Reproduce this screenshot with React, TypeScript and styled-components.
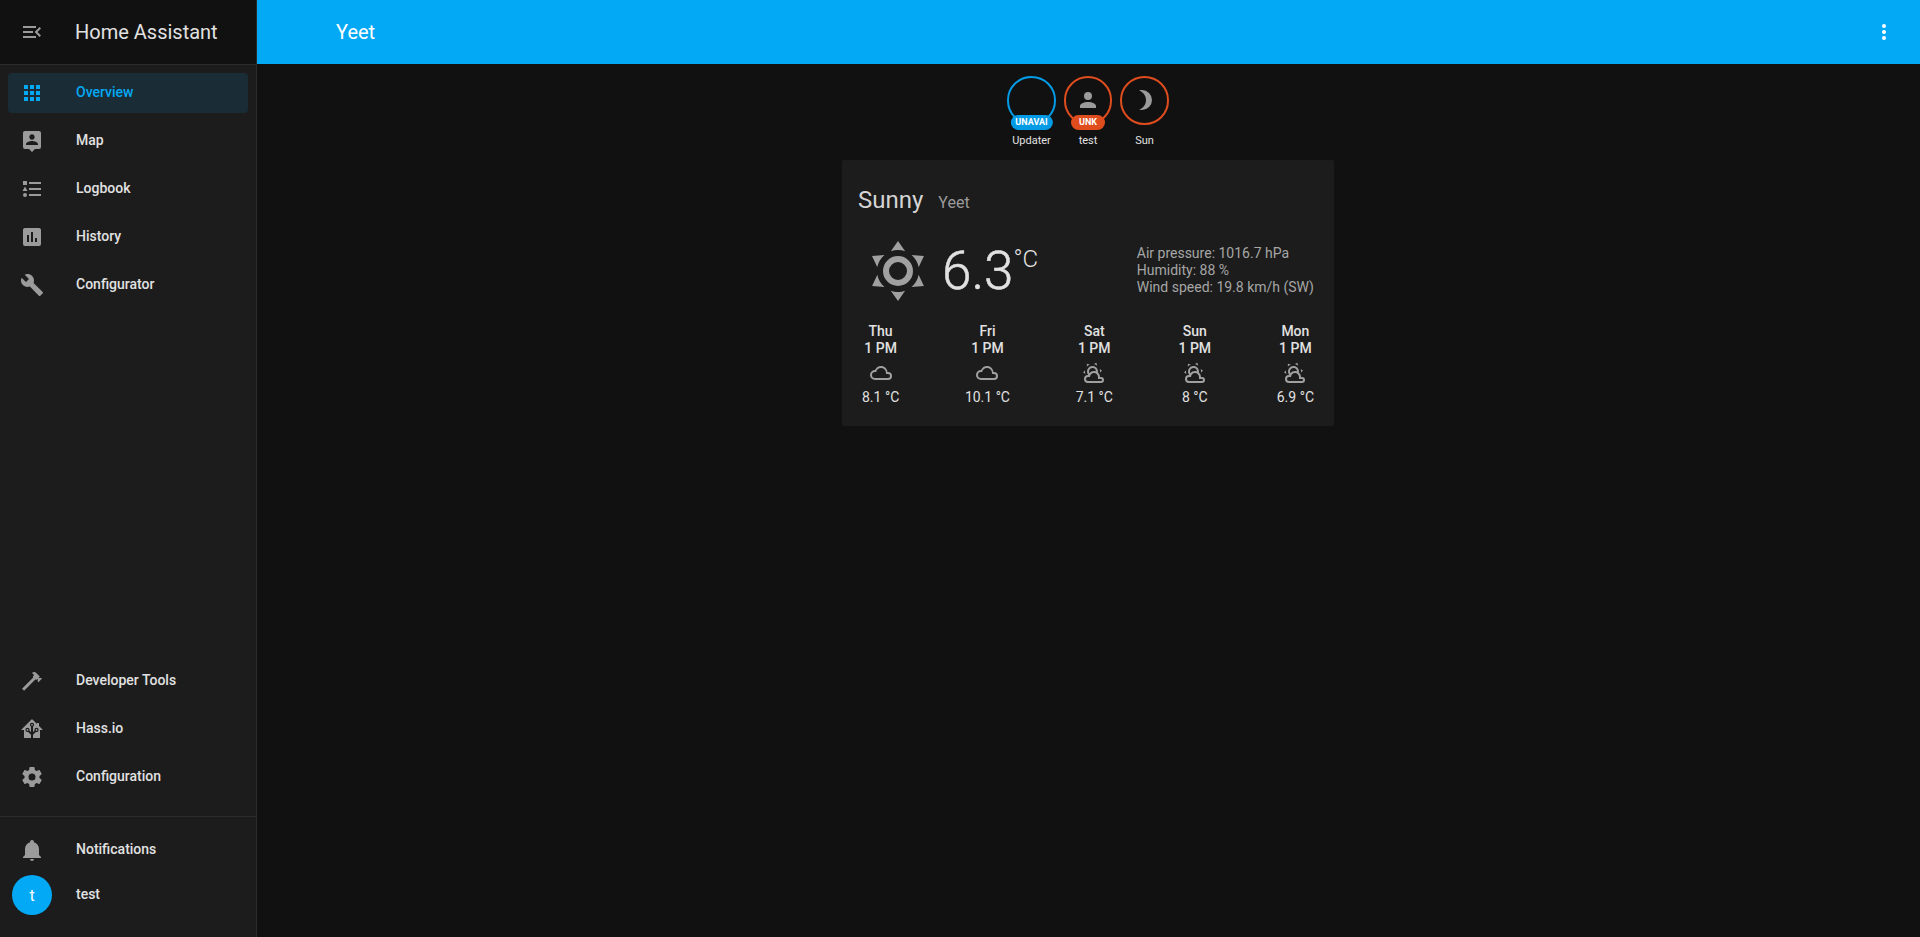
import React from "react";
import styled, { createGlobalStyle } from "styled-components";

const P = {
  menuOpen: "M21,15.61L19.59,17L14.58,12L19.59,7L21,8.39L17.44,12L21,15.61M3,6H16V8H3V6M3,13V11H13V13H3M3,18V16H16V18H3Z",
  dots: "M12,16A2,2 0 0,1 14,18A2,2 0 0,1 12,20A2,2 0 0,1 10,18A2,2 0 0,1 12,16M12,10A2,2 0 0,1 14,12A2,2 0 0,1 12,14A2,2 0 0,1 10,12A2,2 0 0,1 12,10M12,4A2,2 0 0,1 14,6A2,2 0 0,1 12,8A2,2 0 0,1 10,6A2,2 0 0,1 12,4Z",
  apps: "M16,20H20V16H16M16,14H20V10H16M10,8H14V4H10M16,8H20V4H16M10,14H14V10H10M4,14H8V10H4M4,20H8V16H4M10,20H14V16H10M4,8H8V4H4V8Z",
  map: "M18,16H6V15.1C6,13.1 10,12 12,12C14,12 18,13.1 18,15.1M12,5.3C13.5,5.3 14.7,6.5 14.7,8C14.7,9.5 13.5,10.7 12,10.7C10.5,10.7 9.3,9.5 9.3,8C9.3,6.5 10.5,5.3 12,5.3M19,2H5C3.89,2 3,2.89 3,4V18A2,2 0 0,0 5,20H9L12,23L15,20H19A2,2 0 0,0 21,18V4C21,2.89 20.1,2 19,2Z",
  log: "M5,9.5L7.5,14H2.5L5,9.5M3,4H7V8H3V4M5,20A2,2 0 0,0 7,18A2,2 0 0,0 5,16A2,2 0 0,0 3,18A2,2 0 0,0 5,20M9,5V7H21V5H9M9,19H21V17H9V19M9,13H21V11H9V13Z",
  history: "M17,17H15V13H17M13,17H11V7H13M9,17H7V10H9M19,3H5C3.89,3 3,3.89 3,5V19A2,2 0 0,0 5,21H19A2,2 0 0,0 21,19V5C21,3.89 20.1,3 19,3Z",
  wrench: "M22.7,19L13.6,9.9C14.5,7.6 14,4.9 12.1,3C10.1,1 7.1,0.6 4.7,1.7L9,6L6,9L1.6,4.7C0.4,7.1 0.9,10.1 2.9,12.1C4.8,14 7.5,14.5 9.8,13.6L18.9,22.7C19.3,23.1 19.9,23.1 20.3,22.7L22.6,20.4C23.1,20 23.1,19.3 22.7,19Z",
  hammer: "M2 19.63L13.43 8.2L12.72 7.5L14.14 6.07L12 3.89C13.2 2.7 15.09 2.7 16.27 3.89L19.87 7.5L18.45 8.91H21.29L22 9.62L18.45 13.21L17.74 12.5V9.62L16.27 11.04L15.56 10.33L4.13 21.76L2 19.63Z",
  hass: "M21.8,13H20V21H13V17.67L15.79,14.88L16.5,15C17.66,15 18.6,14.06 18.6,12.9C18.6,11.74 17.66,10.8 16.5,10.8A2.1,2.1 0 0,0 14.4,12.9L14.5,13.61L13,15.13V9.65C13.66,9.29 14.1,8.6 14.1,7.8A2.1,2.1 0 0,0 12,5.7A2.1,2.1 0 0,0 9.9,7.8C9.9,8.6 10.34,9.29 11,9.65V15.13L9.5,13.61L9.6,12.9A2.1,2.1 0 0,0 7.5,10.8A2.1,2.1 0 0,0 5.4,12.9A2.1,2.1 0 0,0 7.5,15L8.21,14.88L11,17.67V21H4V13H2.25C1.83,13 1.42,13 1.42,12.79C1.43,12.57 1.85,12.15 2.28,11.72L11,3C11.33,2.67 11.67,2.33 12,2.33C12.33,2.33 12.67,2.67 13,3L17,7V6H19V9L21.78,11.78C22.15,12.15 22.53,12.53 22.54,12.76C22.56,13 22.18,13 21.8,13M7.5,12A0.9,0.9 0 0,1 8.4,12.9A0.9,0.9 0 0,1 7.5,13.8A0.9,0.9 0 0,1 6.6,12.9A0.9,0.9 0 0,1 7.5,12M16.5,12C17,12 17.4,12.4 17.4,12.9C17.4,13.4 17,13.8 16.5,13.8A0.9,0.9 0 0,1 15.6,12.9A0.9,0.9 0 0,1 16.5,12M12,6.9C12.5,6.9 12.9,7.3 12.9,7.8C12.9,8.3 12.5,8.7 12,8.7C11.5,8.7 11.1,8.3 11.1,7.8C11.1,7.3 11.5,6.9 12,6.9Z",
  gear: "M12,15.5A3.5,3.5 0 0,1 8.5,12A3.5,3.5 0 0,1 12,8.5A3.5,3.5 0 0,1 15.5,12A3.5,3.5 0 0,1 12,15.5M19.43,12.97C19.47,12.65 19.5,12.33 19.5,12C19.5,11.67 19.47,11.34 19.43,11L21.54,9.37C21.73,9.22 21.78,8.95 21.66,8.73L19.66,5.27C19.54,5.05 19.27,4.96 19.05,5.05L16.56,6.05C16.04,5.66 15.5,5.32 14.87,5.07L14.5,2.42C14.46,2.18 14.25,2 14,2H10C9.75,2 9.54,2.18 9.5,2.42L9.13,5.07C8.5,5.32 7.96,5.66 7.44,6.05L4.95,5.05C4.73,4.96 4.46,5.05 4.34,5.27L2.34,8.73C2.21,8.95 2.27,9.22 2.46,9.37L4.57,11C4.53,11.34 4.5,11.67 4.5,12C4.5,12.33 4.53,12.65 4.57,12.97L2.46,14.63C2.27,14.78 2.21,15.05 2.34,15.27L4.34,18.73C4.46,18.95 4.73,19.03 4.95,18.95L7.44,17.94C7.96,18.34 8.5,18.68 9.13,18.93L9.5,21.58C9.54,21.82 9.75,22 10,22H14C14.25,22 14.46,21.82 14.5,21.58L14.87,18.93C15.5,18.67 16.04,18.34 16.56,17.94L19.05,18.95C19.27,19.03 19.54,18.95 19.66,18.73L21.66,15.27C21.78,15.05 21.73,14.78 21.54,14.63L19.43,12.97Z",
  bell: "M21,19V20H3V19L5,17V11C5,7.9 7.03,5.17 10,4.29C10,4.19 10,4.1 10,4A2,2 0 0,1 12,2A2,2 0 0,1 14,4C14,4.1 14,4.19 14,4.29C16.97,5.17 19,7.9 19,11V17L21,19M14,21A2,2 0 0,1 12,23A2,2 0 0,1 10,21",
  account: "M12,4A4,4 0 0,1 16,8A4,4 0 0,1 12,12A4,4 0 0,1 8,8A4,4 0 0,1 12,4M12,14C16.42,14 20,15.79 20,18V20H4V18C4,15.79 7.58,14 12,14Z",
  moon: "M9,2C7.95,2 6.95,2.16 6,2.46C10.06,3.73 13,7.5 13,12C13,16.5 10.06,20.27 6,21.54C6.95,21.84 7.95,22 9,22A10,10 0 0,0 19,12A10,10 0 0,0 9,2Z",
  sunny: "M12,7A5,5 0 0,1 17,12A5,5 0 0,1 12,17A5,5 0 0,1 7,12A5,5 0 0,1 12,7M12,9A3,3 0 0,0 9,12A3,3 0 0,0 12,15A3,3 0 0,0 15,12A3,3 0 0,0 12,9M12,2L14.39,5.42C13.65,5.15 12.84,5 12,5C11.16,5 10.35,5.15 9.61,5.42L12,2M3.34,7L7.5,6.65C6.9,7.16 6.36,7.78 5.94,8.5C5.5,9.24 5.25,10 5.11,10.79L3.34,7M3.36,17L5.12,13.23C5.26,14 5.53,14.78 5.95,15.5C6.37,16.24 6.91,16.86 7.5,17.37L3.36,17M20.65,7L18.88,10.79C18.74,10 18.47,9.23 18.05,8.5C17.63,7.78 17.1,7.15 16.5,6.64L20.65,7M20.64,17L16.5,17.36C17.09,16.85 17.62,16.22 18.04,15.5C18.46,14.77 18.73,14 18.87,13.21L20.64,17M12,22L9.59,18.56C10.33,18.83 11.14,19 12,19C12.82,19 13.63,18.83 14.37,18.56L12,22Z",
  cloudy: "M6,19A5,5 0 0,1 1,14A5,5 0 0,1 6,9C7,6.65 9.3,5 12,5C15.43,5 18.24,7.66 18.5,11.03L19,11A4,4 0 0,1 23,15A4,4 0 0,1 19,19H6M19,13H17V12A5,5 0 0,0 12,7C9.5,7 7.45,8.82 7.06,11.19C6.73,11.07 6.37,11 6,11A3,3 0 0,0 3,14A3,3 0 0,0 6,17H19A2,2 0 0,0 21,15A2,2 0 0,0 19,13Z",
  partly: "M12.74,5.47C15.1,6.5 16.35,9.03 15.92,11.46C17.19,12.56 18,14.19 18,16V16.17C18.31,16.06 18.65,16 19,16A3,3 0 0,1 22,19A3,3 0 0,1 19,22H6A4,4 0 0,1 2,18A4,4 0 0,1 6,14H6.27C5,12.45 4.6,10.24 5.5,8.26C6.72,5.5 9.97,4.24 12.74,5.47M11.93,7.3C10.16,6.5 8.09,7.31 7.31,9.07C6.85,10.09 6.93,11.22 7.41,12.13C8.5,10.83 10.16,10 12,10C12.7,10 13.38,10.12 14,10.34C13.94,9.06 13.18,7.86 11.93,7.3M13.55,3.64C13,3.4 12.45,3.23 11.88,3.12L14.37,1.82L15.27,4.71C14.76,4.29 14.19,3.93 13.55,3.64M6.09,4.44C5.6,4.79 5.17,5.19 4.8,5.63L4.91,2.82L7.87,3.5C7.25,3.71 6.65,4.03 6.09,4.44M18,9.71C17.91,9.12 17.78,8.55 17.59,8L19.97,9.5L17.92,11.73C18.03,11.08 18.05,10.4 18,9.71M3.04,11.3C3.11,11.9 3.24,12.47 3.43,13L1.06,11.5L3.1,9.28C3,9.93 2.97,10.61 3.04,11.3M19,18H16V16C16,13.79 14.21,12 12,12C9.79,12 8,13.79 8,16H6A2,2 0 0,0 4,18A2,2 0 0,0 6,20H19A1,1 0 0,0 20,19A1,1 0 0,0 19,18Z",
};

const GlobalStyle = createGlobalStyle`
  html, body { margin: 0; padding: 0; height: 100%; background: #111111; }
  body { font-family: Roboto, "Liberation Sans", sans-serif; color: #e1e1e1; }
  #root { height: 100%; }
`;

const Shell = styled.div`
  display: flex;
  height: 937px;
  overflow: hidden;
`;

const Sidebar = styled.aside`
  width: 256px;
  flex: none;
  display: flex;
  flex-direction: column;
  background: #1c1c1c;
  border-right: 1px solid #2b2b2b;
`;

const Brand = styled.div`
  height: 64px;
  flex: none;
  display: flex;
  align-items: center;
  background: #111111;
  border-bottom: 1px solid #2b2b2b;
  padding-left: 20px;
`;

const BrandIcon = styled.span`
  color: #9b9b9b;
`;

const BrandTitle = styled.span`
  margin-left: 31px;
  font-size: 20px;
  color: #e1e1e1;
`;

const NavList = styled.nav<{ $bottom?: number }>`
  display: flex;
  flex-direction: column;
  padding: 4px 0 ${(p) => p.$bottom ?? 4}px;
`;

const NavFill = styled.div`
  flex: 1;
`;

const NavItem = styled.a<{ $active?: boolean }>`
  height: 40px;
  margin: 4px 8px;
  padding-left: 12px;
  display: flex;
  align-items: center;
  border-radius: 4px;
  font-size: 14px;
  font-weight: 500;
  color: ${(p) => (p.$active ? "#03a9f4" : "#e1e1e1")};
  background: ${(p) => (p.$active ? "#1a2c36" : "transparent")};
  svg { color: ${(p) => (p.$active ? "#03a9f4" : "#9b9b9b")}; }
`;

const NavLabel = styled.span`
  margin-left: 32px;
  margin-bottom: 2px;
`;

const Divider = styled.div`
  height: 1px;
  background: #2b2b2b;
`;

const BottomList = styled.div`
  padding: 9px 0 22px;
  display: flex;
  flex-direction: column;
`;

const UserRow = styled.div`
  height: 40px;
  margin-top: 1px;
  padding-left: 12px;
  display: flex;
  align-items: center;
  font-size: 14px;
  font-weight: 500;
  color: #e1e1e1;
`;

const UserName = styled.span`
  margin-bottom: 2px;
`;

const Avatar = styled.div`
  width: 40px;
  height: 40px;
  border-radius: 50%;
  background: #03a9f4;
  color: #fff;
  display: flex;
  align-items: center;
  justify-content: center;
  font-size: 16px;
  font-weight: 400;
  margin-right: 24px;
`;

const Main = styled.main`
  flex: 1;
  min-width: 0;
  display: flex;
  flex-direction: column;
`;

const TopBar = styled.header`
  height: 64px;
  flex: none;
  background: #03a9f4;
  color: #fff;
  display: flex;
  align-items: center;
  justify-content: space-between;
  padding: 0 24px 0 79px;
  font-size: 20px;
`;

const Content = styled.div`
  display: flex;
  flex-direction: column;
  align-items: center;
  padding-right: 1px;
`;

const Badges = styled.div`
  display: flex;
  gap: 8px;
  padding-top: 12px;
`;

const Badge = styled.div`
  width: 48.5px;
  display: flex;
  flex-direction: column;
  align-items: center;
`;

const Ring = styled.div<{ $color: string }>`
  position: relative;
  box-sizing: border-box;
  width: 48.5px;
  height: 48.5px;
  border-radius: 50%;
  border: 2px solid ${(p) => p.$color};
  display: flex;
  align-items: center;
  justify-content: center;
  color: #9b9b9b;
`;

const Pill = styled.span<{ $color: string; $pad: number }>`
  position: absolute;
  left: 50%;
  top: 37px;
  transform: translateX(-50%);
  height: 15px;
  line-height: 15px;
  padding: 0 ${(p) => p.$pad}px;
  border-radius: 8px;
  background: ${(p) => p.$color};
  color: #fff;
  font-size: 9px;
  font-weight: 700;
  white-space: nowrap;
`;

const BadgeName = styled.span`
  margin-top: 9px;
  font-size: 11px;
  line-height: 14px;
  color: #e1e1e1;
  white-space: nowrap;
`;

const Card = styled.section`
  margin-top: 12px;
  box-sizing: border-box;
  width: 492px;
  height: 266px;
  background: #1c1c1c;
  border-radius: 2px;
  padding: 24px 16px 0;
`;

const CardHeader = styled.div`
  display: flex;
  align-items: baseline;
  height: 32px;
`;

const Condition = styled.span`
  font-size: 24px;
  line-height: 32px;
  color: #d4d4d4;
`;

const Place = styled.span`
  margin-left: 15px;
  font-size: 16px;
  color: #9b9b9b;
`;

const Now = styled.div`
  display: flex;
  align-items: center;
  justify-content: space-between;
  margin-top: 19px;
  height: 72px;
`;

const NowLeft = styled.div`
  display: flex;
  align-items: center;
  margin-left: 4px;
  color: #a0a0a0;
`;

const Temp = styled.span`
  margin-left: 8px;
  font-size: 53px;
  font-weight: 300;
  line-height: 72px;
  color: #e1e1e1;
  -webkit-text-stroke: 0.5px #e1e1e1;
`;

const TempUnit = styled.sup`
  font-size: 24px;
  font-weight: 300;
  vertical-align: super;
  line-height: 0;
  position: relative;
  top: -3px;
  -webkit-text-stroke: 0;
`;

const Attributes = styled.div`
  font-size: 14px;
  line-height: 16.8px;
  color: #a6a6a6;
  margin-right: 4px;
`;

const Forecast = styled.div`
  display: flex;
  justify-content: space-between;
  margin: 16px 4px 0;
`;

const Day = styled.div`
  display: flex;
  flex-direction: column;
  align-items: center;
  font-size: 14px;
  color: #e1e1e1;
`;

const DayLabel = styled.div`
  font-weight: 500;
  line-height: 17px;
  text-align: center;
`;

const DayIcon = styled.div`
  color: #a0a0a0;
  height: 24px;
  margin: 4px 0 2px;
`;

const DayTemp = styled.div`
  line-height: 20px;
  white-space: nowrap;
`;

const Icon = ({ d, size = 24, evenodd }: { d: string; size?: number; evenodd?: boolean }) => (
  <svg
    width={size}
    height={size}
    viewBox="0 0 24 24"
    fill="currentColor"
    style={{ display: "block", flex: "none" }}
  >
    <path d={d} fillRule={evenodd ? "evenodd" : "nonzero"} />
  </svg>
);

const topNav = [
  { icon: P.apps, label: "Overview", active: true },
  { icon: P.map, label: "Map" },
  { icon: P.log, label: "Logbook" },
  { icon: P.history, label: "History" },
  { icon: P.wrench, label: "Configurator" },
];
const lowerNav = [
  { icon: P.hammer, label: "Developer Tools" },
  { icon: P.hass, label: "Hass.io" },
  { icon: P.gear, label: "Configuration" },
];
const days = [
  { day: "Thu", icon: P.cloudy, temp: "8.1 °C" },
  { day: "Fri", icon: P.cloudy, temp: "10.1 °C" },
  { day: "Sat", icon: P.partly, temp: "7.1 °C" },
  { day: "Sun", icon: P.partly, temp: "8 °C" },
  { day: "Mon", icon: P.partly, temp: "6.9 °C" },
];

export default function App() {
  return (
    <Shell>
      <GlobalStyle />
      <Sidebar>
        <Brand>
          <BrandIcon>
            <Icon d={P.menuOpen} />
          </BrandIcon>
          <BrandTitle>Home Assistant</BrandTitle>
        </Brand>
        <NavList>
          {topNav.map((n) => (
            <NavItem key={n.label} $active={n.active}>
              <Icon d={n.icon} />
              <NavLabel>{n.label}</NavLabel>
            </NavItem>
          ))}
        </NavList>
        <NavFill />
        <NavList $bottom={15}>
          {lowerNav.map((n) => (
            <NavItem key={n.label}>
              <Icon d={n.icon} />
              <NavLabel>{n.label}</NavLabel>
            </NavItem>
          ))}
        </NavList>
        <Divider />
        <BottomList>
          <NavItem>
            <Icon d={P.bell} />
            <NavLabel>Notifications</NavLabel>
          </NavItem>
          <UserRow>
            <Avatar>t</Avatar>
            <UserName>test</UserName>
          </UserRow>
        </BottomList>
      </Sidebar>
      <Main>
        <TopBar>
          <span>Yeet</span>
          <Icon d={P.dots} />
        </TopBar>
        <Content>
          <Badges>
            <Badge>
              <Ring $color="#039be5">
                <Pill $color="#039be5" $pad={5}>UNAVAI</Pill>
              </Ring>
              <BadgeName>Updater</BadgeName>
            </Badge>
            <Badge>
              <Ring $color="#df4c1e">
                <Icon d={P.account} />
                <Pill $color="#df4c1e" $pad={8}>UNK</Pill>
              </Ring>
              <BadgeName>test</BadgeName>
            </Badge>
            <Badge>
              <Ring $color="#df4c1e">
                <Icon d={P.moon} />
              </Ring>
              <BadgeName>Sun</BadgeName>
            </Badge>
          </Badges>
          <Card>
            <CardHeader>
              <Condition>Sunny</Condition>
              <Place>Yeet</Place>
            </CardHeader>
            <Now>
              <NowLeft>
                <Icon d={P.sunny} size={72} />
                <Temp>
                  6.3<TempUnit>°C</TempUnit>
                </Temp>
              </NowLeft>
              <Attributes>
                <div>Air pressure: 1016.7 hPa</div>
                <div>Humidity: 88 %</div>
                <div>Wind speed: 19.8 km/h (SW)</div>
              </Attributes>
            </Now>
            <Forecast>
              {days.map((d) => (
                <Day key={d.day}>
                  <DayLabel>
                    {d.day}
                    <br />1 PM
                  </DayLabel>
                  <DayIcon>
                    <Icon d={d.icon} evenodd />
                  </DayIcon>
                  <DayTemp>{d.temp}</DayTemp>
                </Day>
              ))}
            </Forecast>
          </Card>
        </Content>
      </Main>
    </Shell>
  );
}
